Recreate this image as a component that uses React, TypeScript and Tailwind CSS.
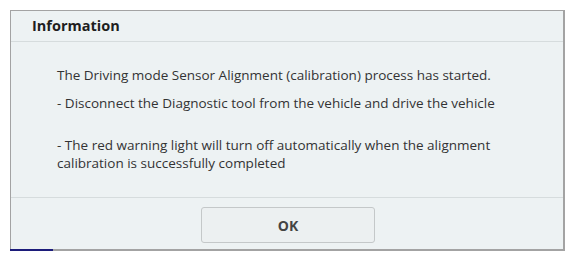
import React from "react";

export default function App() {
  return (
    <div className="w-[575px] h-[260px] bg-white pt-[10px] pl-[10px]" style={{ fontFamily: "'Open Sans', Roboto, sans-serif" }}>
      <div className="relative w-[555px] h-[241px] flex flex-col bg-[#edf2f3] border border-[#a3a3a3] border-r-2 border-b-2">
        <div className="h-[31px] flex items-center pl-[21px] border-b border-[#d6dcdd]">
          <span className="text-[14.5px] font-bold text-[#1e1e1e]">Information</span>
        </div>
        <div className="flex-1 pl-[46px] pt-[24px] text-[13.5px] leading-[18px] text-[#333]">
          <p>The Driving mode Sensor Alignment (calibration) process has started.</p>
          <p className="mt-[10px]">- Disconnect the Diagnostic tool from the vehicle and drive the vehicle</p>
          <p className="mt-[24px]">
            - The red warning light will turn off automatically when the alignment
            <br />
            calibration is successfully completed
          </p>
        </div>
        <div className="h-[52px] border-t border-[#d6dcdd] flex justify-center pt-[9px]">
          <button className="w-[174px] h-[36px] rounded-[3px] border border-[#c4c8c9] bg-[#ecf0f1] text-[14px] font-bold text-[#444] ml-[2px]">
            OK
          </button>
        </div>
        <div className="absolute left-[-1px] bottom-[-2px] w-[43px] h-[2px] bg-[#1c1c7a]" />
      </div>
    </div>
  );
}
